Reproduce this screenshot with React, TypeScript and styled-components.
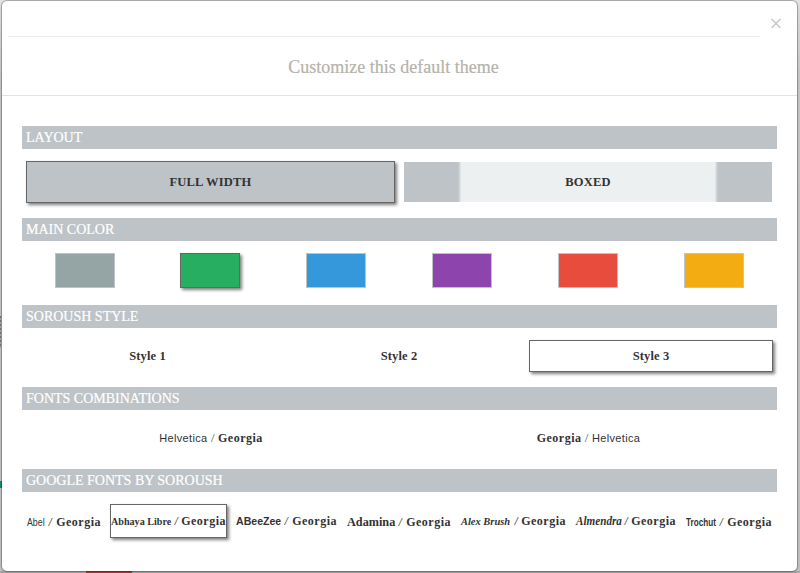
import React from "react";
import styled, { createGlobalStyle } from "styled-components";

const serif = `"Liberation Serif", "Times New Roman", serif`;
const sans = `"Liberation Sans", Arial, sans-serif`;

const GlobalStyle = createGlobalStyle`
  *, *::before, *::after { box-sizing: border-box; }
  body { margin: 0; }
`;

const Backdrop = styled.div`
  width: 800px;
  height: 573px;
  padding: 1px 3px 2px 2px;
  overflow: hidden;
  background:
    linear-gradient(#168a78, #168a78) 0 481px / 2px 7px no-repeat,
    repeating-linear-gradient(#777 0 2px, #aaa 2px 4px) 0 316px / 1px 32px no-repeat,
    linear-gradient(#a83a3c, #a83a3c) 86px 571px / 46px 2px no-repeat,
    linear-gradient(#a8a8a8, #a8a8a8) 0 571px / 100% 2px no-repeat,
    linear-gradient(#e4e4e4, #cacaca 80px, #c4c4c4);
`;

const Dialog = styled.main`
  width: 795px;
  height: 570px;
  background: #fff;
  border-radius: 5px;
  box-shadow: 0 0 0 1px rgba(0, 0, 0, 0.22), 0 1px 4px rgba(0, 0, 0, 0.2);
  font-family: ${serif};
  color: #333;
`;

const DialogTop = styled.div`
  display: flex;
  height: 36px;
  padding-left: 6px;
`;

const TopRule = styled.div`
  width: 752px;
  border-bottom: 1px solid #ececec;
`;

const CloseButton = styled.button`
  width: 12px;
  height: 12px;
  margin: 16px 0 0 10px;
  padding: 0;
  border: 0;
  background: none;
  color: #ccc;
  svg { display: block; }
`;

const Title = styled.h1`
  height: 59px;
  margin: 0;
  padding-right: 12px;
  border-bottom: 1px solid #e2e2e2;
  color: #b5b3ab;
  font-size: 18px;
  font-weight: 400;
  line-height: 60px;
  text-align: center;
  -webkit-text-stroke: 0.2px currentColor;
`;

const Content = styled.div`
  padding: 30px 20px 0;
`;

const Section = styled.section<{ $height: number }>`
  height: ${(p) => p.$height}px;
`;

const Heading = styled.h2`
  height: 23px;
  margin: 0;
  padding-left: 4px;
  background: #bdc3c7;
  color: #fff;
  font-size: 14px;
  font-weight: 400;
  line-height: 23px;
  -webkit-text-stroke: 0.2px currentColor;
`;

const OptionGrid = styled.div<{ $columns: string }>`
  display: grid;
  grid-template-columns: ${(p) => p.$columns};
  padding-top: 12px;
`;

const selectedStyle = `
  border-color: #666;
  box-shadow: 2px 2px 3px rgba(0, 0, 0, 0.5);
`;

const Option = styled.button<{ $height: number; $selected?: boolean }>`
  height: ${(p) => p.$height}px;
  margin: 0 4px;
  padding: 0;
  border: 1px solid transparent;
  background: #fff;
  background-clip: padding-box;
  color: #333;
  font: 700 12.5px/20px ${serif};
  letter-spacing: 0.1px;
  ${(p) => p.$selected && selectedStyle}
`;

const LayoutOption = styled(Option)<{ $boxed?: boolean }>`
  background: ${(p) =>
    p.$boxed
      ? "linear-gradient(90deg, #bdc3c7 54px, #ecf0f1 57.5px calc(100% - 57.5px), #bdc3c7 calc(100% - 54px))"
      : "#bdc3c7"};
  background-clip: padding-box;
  letter-spacing: 0.2px;
`;

const Swatch = styled.button<{ $color: string; $selected?: boolean }>`
  width: 60px;
  height: 35px;
  margin-left: 33px;
  padding: 0;
  border: 1px solid #bdc3c7;
  background: ${(p) => p.$color};
  ${(p) => p.$selected && selectedStyle}
`;

const FontOption = styled(Option)`
  font-weight: 400;
  font-size: 12px;
  white-space: pre;
`;

const FontRow = styled.div`
  display: flex;
  gap: 8px;
  padding: 12px 4px 0;
`;

const FontCard = styled.button<{ $width: number; $low?: boolean; $selected?: boolean }>`
  display: flex;
  align-items: baseline;
  flex: none;
  width: ${(p) => p.$width}px;
  height: 34px;
  padding: ${(p) => (p.$low ? 7 : 6)}px 0 0;
  border: 1px solid transparent;
  background: #fff;
  color: #333;
  font: 400 12px/20px ${serif};
  white-space: nowrap;
  ${(p) => p.$selected && selectedStyle}
`;

const Georgia = styled.span`
  font: 700 12px/20px ${serif};
  letter-spacing: 0.5px;
`;

const CardGeorgia = styled(Georgia)`
  margin-left: auto;
`;

const Helvetica = styled.span`
  font: 400 11px/20px ${sans};
  letter-spacing: 0.35px;
`;

const Slash = styled.span`
  color: #555;
  font: 400 13px/20px ${serif};
`;

const CardSlash = styled(Slash)`
  display: inline-block;
  margin-left: 3px;
  transform: scaleX(1.3);
  transform-origin: left;
`;

type Face = {
  name: string;
  width: number;
  nameWidth: number;
  scale: number;
  font: string;
  low?: boolean;
  selected?: boolean;
};

const NameSlot = styled.span<{ $width: number }>`
  display: block;
  flex: none;
  width: ${(p) => p.$width}px;
  text-align: left;
`;

const FaceName = styled.span<{ $font: string; $scale: number }>`
  display: inline-block;
  font: ${(p) => p.$font};
  transform: scaleX(${(p) => p.$scale});
  transform-origin: left;
`;

const faces: Face[] = [
  { name: "Abel", width: 76, nameWidth: 18, scale: 0.8, font: `400 11px/20px ${sans}`, low: true },
  { name: "Abhaya Libre", width: 117, nameWidth: 60, scale: 0.92, font: `700 11px/20px ${serif}`, selected: true },
  { name: "ABeeZee", width: 103, nameWidth: 45, scale: 0.96, font: `700 11px/20px ${sans}` },
  { name: "Adamina", width: 106, nameWidth: 48, scale: 1.02, font: `700 12px/20px ${serif}`, low: true },
  { name: "Alex Brush", width: 107, nameWidth: 50, scale: 0.95, font: `italic 700 11px/20px ${serif}` },
  { name: "Almendra", width: 102, nameWidth: 45, scale: 0.93, font: `italic 700 12px/20px ${serif}` },
  { name: "Trochut", width: 88, nameWidth: 30, scale: 0.74, font: `700 11px/20px ${sans}`, low: true },
];

const swatches = ["#95a5a6", "#27ae60", "#3498db", "#8e44ad", "#e74c3c", "#f3ac12"];

export default function App() {
  return (
    <>
      <GlobalStyle />
      <Backdrop>
        <Dialog>
          <DialogTop>
            <TopRule />
            <CloseButton aria-label="Close">
              <svg width="12" height="12" viewBox="0 0 12 12">
                <path d="M1.5 1.9 10.5 10.9M10.5 1.9 1.5 10.9" stroke="currentColor" strokeWidth="1.5" />
              </svg>
            </CloseButton>
          </DialogTop>
          <Title>Customize this default theme</Title>
          <Content>
            <Section $height={92}>
              <Heading>LAYOUT</Heading>
              <OptionGrid $columns="377px 378px">
                <LayoutOption $height={42} $selected>FULL WIDTH</LayoutOption>
                <LayoutOption $height={42} $boxed>BOXED</LayoutOption>
              </OptionGrid>
            </Section>
            <Section $height={87}>
              <Heading>MAIN COLOR</Heading>
              <OptionGrid $columns="125px repeat(5, 126px)">
                {swatches.map((color, i) => (
                  <Swatch key={color} $color={color} $selected={i === 1} aria-label={color} />
                ))}
              </OptionGrid>
            </Section>
            <Section $height={82}>
              <Heading>SOROUSH STYLE</Heading>
              <OptionGrid $columns="251px 252px 252px">
                <Option $height={32}>Style 1</Option>
                <Option $height={32}>Style 2</Option>
                <Option $height={32} $selected>Style 3</Option>
              </OptionGrid>
            </Section>
            <Section $height={82}>
              <Heading>FONTS COMBINATIONS</Heading>
              <OptionGrid $columns="378px 377px">
                <FontOption $height={32}>
                  <Helvetica>Helvetica</Helvetica><Slash> / </Slash><Georgia>Georgia</Georgia>
                </FontOption>
                <FontOption $height={32}>
                  <Georgia>Georgia</Georgia><Slash> / </Slash><Helvetica>Helvetica</Helvetica>
                </FontOption>
              </OptionGrid>
            </Section>
            <Section $height={80}>
              <Heading>GOOGLE FONTS BY SOROUSH</Heading>
              <FontRow>
                {faces.map((f) => (
                  <FontCard key={f.name} $width={f.width} $low={f.low} $selected={f.selected}>
                    <NameSlot $width={f.nameWidth}>
                      <FaceName $font={f.font} $scale={f.scale}>{f.name}</FaceName>
                    </NameSlot>
                    <CardSlash>/</CardSlash>
                    <CardGeorgia>Georgia</CardGeorgia>
                  </FontCard>
                ))}
              </FontRow>
            </Section>
          </Content>
        </Dialog>
      </Backdrop>
    </>
  );
}
